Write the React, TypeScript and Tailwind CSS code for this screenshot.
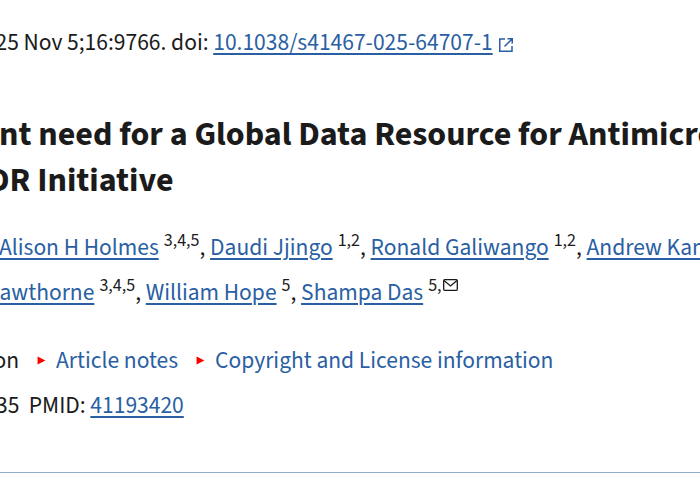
function A({ children }: { children: React.ReactNode }) {
  return (
    <a href="#" className="text-[#2a5fa3] underline decoration-[2px] underline-offset-[3px]">
      {children}
    </a>
  );
}

function Sup({ children }: { children: React.ReactNode }) {
  return <sup className="top-0 ml-[5px] align-super text-[18px] leading-none">{children}</sup>;
}

function ExternalIcon() {
  return (
    <svg viewBox="0 0 16 16" className="ml-[5px] inline-block h-4 w-4 align-[-3px] text-[#2a5fa3]" fill="none" stroke="currentColor" strokeWidth="1.5">
      <path d="M7 2H1.75v12.25H14V9" />
      <path d="M9.5 1.75h4.75V6.5M14 2L6.5 9.5" />
    </svg>
  );
}

function MailIcon() {
  return (
    <svg viewBox="0 0 15 12" className="ml-[1px] inline-block h-3 w-[15px] align-[9px]" fill="none" stroke="#1a1a1a" strokeWidth="1.3">
      <rect x="0.7" y="0.7" width="13.6" height="10.6" rx="1" />
      <path d="M1 1.5l6.5 5.5L14 1.5" />
    </svg>
  );
}

function Caret() {
  return (
    <svg viewBox="0 0 8 8" className="inline-block h-[9px] w-[9px]" fill="#ff0000">
      <path d="M0.5 0.5L7.5 4L0.5 7.5Z" />
    </svg>
  );
}

export default function App() {
  return (
    <div className="h-[487px] w-[700px] overflow-hidden whitespace-nowrap bg-white font-['Source_Sans_3','Lato','Noto_Sans',sans-serif] text-[23.5px] text-[#1b1b1b]">
      <div className="-ml-[4.5px] pt-[27px] leading-[32px]">
        25 Nov 5;16:9766. doi: <A>10.1038/s41467-025-64707-1</A>
        <ExternalIcon />
      </div>

      <h1 className="mt-[53px] text-[34px] font-bold leading-[46px] text-[#1b1b1b]">
        <div className="-ml-[1px]">nt need for a Global Data Resource for Antimicrobial</div>
        <div className="-ml-[12px]">DR Initiative</div>
      </h1>

      <div className="mt-[21px] leading-[45px]">
        <div className="-ml-[1px]">
          <A>Alison H Holmes</A>
          <Sup>3,4,5</Sup>, <A>Daudi Jjingo</A>
          <Sup>1,2</Sup>, <A>Ronald Galiwango</A>
          <Sup>1,2</Sup>, <A>Andrew Kambugu</A>
        </div>
        <div className="-ml-[0.5px]">
          <A>awthorne</A>
          <Sup>3,4,5</Sup>, <A>William Hope</A>
          <Sup>5</Sup>, <A>Shampa Das</A>
          <Sup>5,</Sup>
          <MailIcon />
        </div>
      </div>

      <div className="-ml-[6.5px] mt-[23px] flex items-center leading-[45px] text-[#2a5fa3]">
        <span className="text-[#1b1b1b]">on</span>
        <span className="ml-[18px] flex items-center"><Caret /></span>
        <span className="ml-[10px]">Article notes</span>
        <span className="ml-[18px] flex items-center"><Caret /></span>
        <span className="ml-[10px]">Copyright and License information</span>
      </div>

      <div className="-ml-[4px] leading-[45px]">
        35&nbsp;&nbsp;PMID: <A>41193420</A>
      </div>

      <div className="mt-[44px] h-px bg-[#94aed1]" />
    </div>
  );
}
